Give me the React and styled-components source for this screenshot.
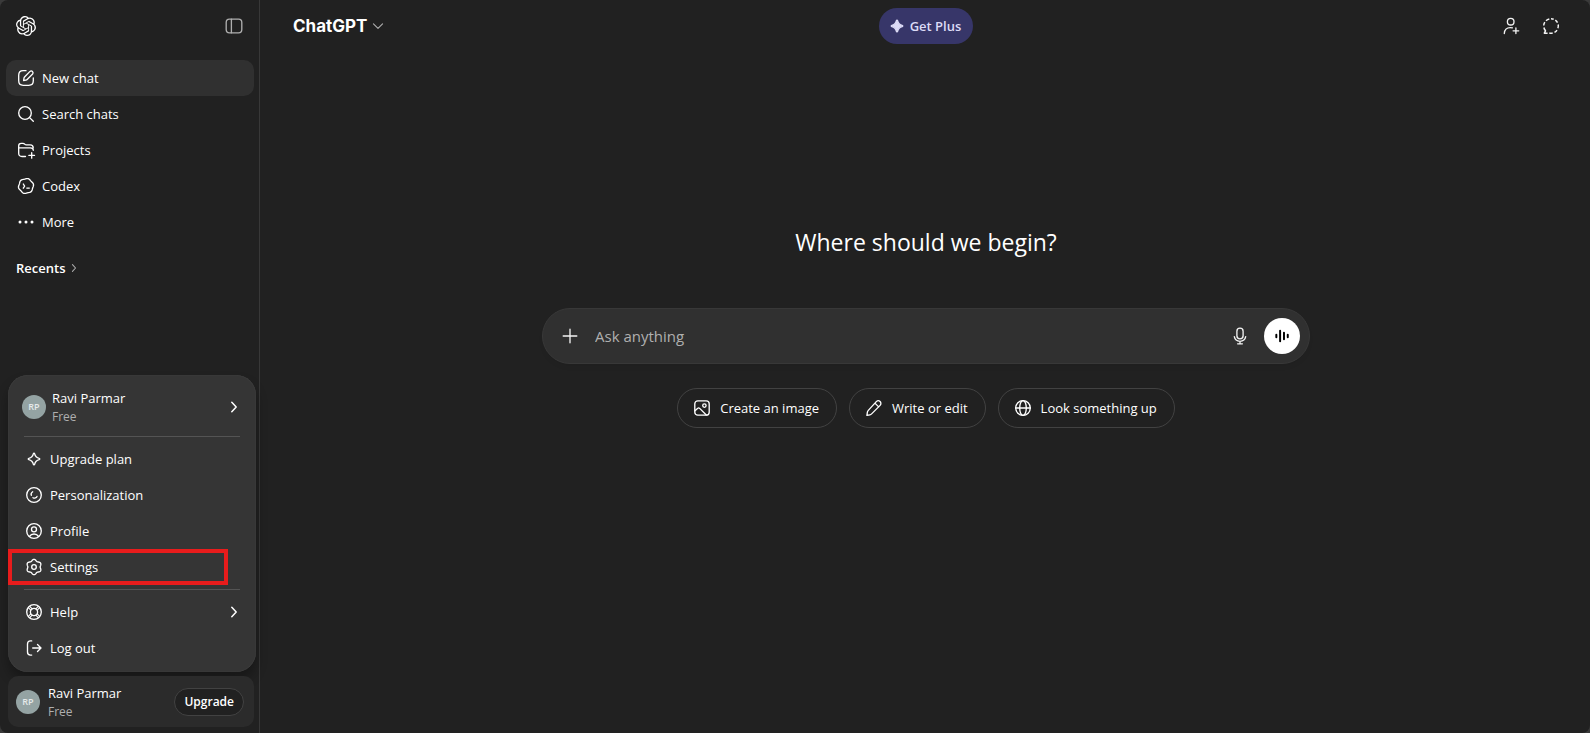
import React, { useState } from 'react'
import styled, { createGlobalStyle, css } from 'styled-components';
import { SiOpenai } from 'react-icons/si';

const GlobalStyle = createGlobalStyle`
  * {
    box-sizing: border-box;
  }
  body {
    margin: 0;
    background-color: #3a3a3a;
    color: #ffffff;
    font-family: "Open Sans", "Noto Sans", sans-serif;
    font-size: 13px;
    line-height: 20px;
  }
  button, input {
    font: inherit;
    color: inherit;
  }
  button {
    border: none;
    background: none;
    padding: 0;
    cursor: pointer;
  }
  a {
    color: inherit;
    text-decoration: none;
  }
`;

// closed outline with evenly spaced lobes around the icon centre
const lobedPath = (lobes, radius, depth, turn = 0) => {
  const steps = 96;
  const points = Array.from({ length: steps }, (_, i) => {
    const angle = (i / steps) * Math.PI * 2;
    const r = radius + depth * Math.cos(lobes * angle);
    const x = 10 + r * Math.sin(angle + turn);
    const y = 10 - r * Math.cos(angle + turn);
    return `${x.toFixed(2)} ${y.toFixed(2)}`;
  });
  return `M${points.join('L')}z`;
};

const icons = {
  panel: (
    <>
      <rect x="2.2" y="3.2" width="15.6" height="13.6" rx="3.2" />
      <path d="M7.4 3.2v13.6" />
    </>
  ),
  compose: (
    <>
      <path d="M10 2.7H7.2C4.4 2.7 2.7 4.4 2.7 7.2v5.6c0 2.8 1.7 4.5 4.5 4.5h5.6c2.8 0 4.5-1.7 4.5-4.5V10" />
      <path d="M14 3.4a1.85 1.85 0 0 1 2.6 2.6l-5.2 5.3c-.4.4-.9.7-1.5.8l-2.3.4.4-2.3c.1-.6.4-1.1.8-1.5z" />
    </>
  ),
  search: (
    <>
      <circle cx="9" cy="9" r="6.3" />
      <path d="M13.6 13.6 17.3 17.3" />
    </>
  ),
  projects: (
    <>
      <path d="M9.5 16.5H6c-2.200 0-3.300-1.200-3.300-3.300V5.800c0-1.500 1-2.500 2.500-2.500h1.700c.8 0 1.300.2 1.800.8.500.6 1 .8 1.700.8h3.800c1.900 0 3 1.100 3 3" />
      <path d="M2.700 7.900h11.600c1.800 0 3 1.100 3 2.400" />
      <path d="M15.700 12.600v5.600M12.900 15.400h5.600" />
    </>
  ),
  codex: (
    <>
      <path d={lobedPath(6, 7.3, 0.35, 0.3)} />
      <path d="m7.300 8 1.300 2.100-1.300 2.100M10.800 12.100h2.500" />
    </>
  ),
  more: (
    <g fill="currentColor" stroke="none">
      <circle cx="4" cy="10" r="1.500" />
      <circle cx="10" cy="10" r="1.500" />
      <circle cx="16" cy="10" r="1.500" />
    </g>
  ),
  chevronRight: <path d="m7.800 5.200 4.400 4.800-4.400 4.800" />,
  chevronDown: <path d="m3.500 7 6.500 6.300L16.500 7" />,
  sparkle: <path d="M10 4.200c.3 0 .5.200.6.500.6 2.800 1.900 4.100 4.700 4.700.6.100.6 1.100 0 1.200-2.800.6-4.100 1.900-4.700 4.700-.1.600-1.100.6-1.200 0-.6-2.800-1.900-4.100-4.700-4.700-.6-.1-.6-1.100 0-1.200 2.800-.6 4.100-1.900 4.700-4.700.1-.3.300-.5.600-.5z" />,
  personalization: (
    <>
      <circle cx="10" cy="10" r="7.300" />
      <path d="M8.700 6.800c-1.300.8-1.900 2.200-1.400 3.600" />
      <path d="M9 12.700c1.500.9 3.300.3 4-1.300" />
    </>
  ),
  profile: (
    <>
      <circle cx="10" cy="10" r="7.300" />
      <circle cx="10" cy="8.300" r="2.500" />
      <path d="M5.500 15.400c1-1.600 2.600-2.400 4.500-2.400s3.500.8 4.500 2.400" />
    </>
  ),
  settings: (
    <>
      <path d={lobedPath(6, 6.9, 0.75)} />
      <circle cx="10" cy="10" r="2.300" />
    </>
  ),
  help: (
    <>
      <circle cx="10" cy="10" r="7.300" />
      <circle cx="10" cy="10" r="3.600" />
      <path d="m4.300 5.700 2.500 2.500M5.700 4.300l2.500 2.500M15.700 5.700l-2.500 2.500M14.300 4.300l-2.500 2.500M4.300 14.300l2.500-2.500M5.700 15.700l2.500-2.500M15.700 14.300l-2.500-2.500M14.300 15.700l-2.500-2.500" strokeWidth="1.100" />
    </>
  ),
  logout: (
    <>
      <path d="M7.700 2.900H6.500C4.500 2.900 3.500 4 3.500 6v8c0 2 1 3.100 3 3.100h1.200" />
      <path d="M8.700 10h8.200M13.500 6.500l3.500 3.500-3.500 3.500" />
    </>
  ),
  addPerson: (
    <>
      <circle cx="9.700" cy="5.700" r="3.300" />
      <path d="M3.300 17.500c.2-3.500 2.500-5.900 6-5.900.8 0 1.500.1 2.100.3" />
      <path d="M14.900 12v5.600M12.100 14.800h5.600" />
    </>
  ),
  temporary: (
    <g strokeLinecap="butt">
      <path d="M8.300 2.900A7.300 7.300 0 0 0 5 4.700M3.800 6.200A7.300 7.300 0 0 0 2.700 9.500M2.900 11.500A7.300 7.300 0 0 0 4.500 14.800L3.300 17.200H6.600" />
      <path d="M8.300 17.100A7.300 7.300 0 0 0 11.700 17.100M13.500 16.400A7.300 7.300 0 0 0 16 14.100M16.900 12.300A7.300 7.300 0 0 0 17.200 8.500M16.500 6.700A7.300 7.300 0 0 0 14.300 4.100M12.700 3.200A7.300 7.300 0 0 0 10 2.700" />
    </g>
  ),
  plus: <path d="M10 3.200v13.600M3.200 10h13.600" />,
  mic: (
    <>
      <rect x="6.900" y="2.200" width="6.200" height="10.600" rx="3.100" />
      <path d="M4.300 10.700c.5 2.700 2.800 4.600 5.700 4.600s5.200-1.900 5.700-4.600M10 15.300v2.400M7.600 17.800h4.800" />
    </>
  ),
  voice: <path d="M3.700 8.500v3M7.900 4.100v11.800M12.200 6.500v7M16.400 8.500v3" strokeWidth="2.200" />,
  image: (
    <>
      <rect x="2.800" y="2.800" width="14.400" height="14.400" rx="3" />
      <circle cx="12.400" cy="7.600" r="1.700" />
      <path d="m3 12.700 2.500-2.300c.7-.6 1.500-.6 2.200 0L14.300 17" />
    </>
  ),
  pencil: (
    <path d="M12.300 3.600c1.100-1.100 2.800-1.100 3.800-.1s1.100 2.800 0 3.900l-8.500 8.500c-.5.500-1 .8-1.700.9l-3 .6.500-3.200c.1-.7.400-1.300.9-1.800zM10.900 5.100l3.800 3.800" />
  ),
  globe: (
    <>
      <circle cx="10" cy="10" r="7.300" />
      <ellipse cx="10" cy="10" rx="3.300" ry="7.300" />
      <path d="M2.700 10h14.600" />
    </>
  ),
};

const Icon = ({ name, size = 20, width = 1.33, filled }) => (
  <StyleIcon
    viewBox="0 0 20 20"
    width={size}
    height={size}
    fill={filled ? 'currentColor' : 'none'}
    stroke="currentColor"
    strokeWidth={width}
    strokeLinecap="round"
    strokeLinejoin="round"
    aria-hidden="true"
  >
    {icons[name]}
  </StyleIcon>
);

const navItems = [
  { icon: 'compose', title: 'New chat', active: true },
  { icon: 'search', title: 'Search chats' },
  { icon: 'projects', title: 'Projects' },
  { icon: 'codex', title: 'Codex' },
  { icon: 'more', title: 'More' },
];

const accountItems = [
  { icon: 'sparkle', title: 'Upgrade plan' },
  { icon: 'personalization', title: 'Personalization' },
  { icon: 'profile', title: 'Profile' },
  { icon: 'settings', title: 'Settings', marked: true },
];

const suggestions = [
  { icon: 'image', title: 'Create an image' },
  { icon: 'pencil', title: 'Write or edit' },
  { icon: 'globe', title: 'Look something up' },
];

const Account = () => (
  <>
    <Avatar>RP</Avatar>
    <AccountText>
      <span>Ravi Parmar</span>
      <small>Free</small>
    </AccountText>
  </>
);

const App = () => {
  const [prompt, setPrompt] = useState('');

  return (
    <Page>
      <GlobalStyle />
      <Sidebar>
        <SidebarHeader>
          <LogoLink href="#home" aria-label="ChatGPT home">
            <SiOpenai size={20} />
          </LogoLink>
          <IconButton $muted aria-label="Close sidebar">
            <Icon name="panel" />
          </IconButton>
        </SidebarHeader>
        <Nav>
          {navItems.map(item => (
            <NavLink key={item.title} href="#chat" $active={item.active}>
              <Icon name={item.icon} />
              {item.title}
            </NavLink>
          ))}
        </Nav>
        <Recents>
          Recents
          <Icon name="chevronRight" size={14} width={1.5} />
        </Recents>
        <SidebarFooter>
          <AccountMenu>
            <MenuAccount>
              <Account />
              <Icon name="chevronRight" width={1.5} />
            </MenuAccount>
            <Divider />
            {accountItems.map(item => (
              <MenuItem key={item.title} $marked={item.marked}>
                <Icon name={item.icon} />
                {item.title}
              </MenuItem>
            ))}
            <Divider />
            <MenuItem>
              <Icon name="help" />
              <MenuLabel>Help</MenuLabel>
              <Icon name="chevronRight" width={1.5} />
            </MenuItem>
            <MenuItem>
              <Icon name="logout" />
              Log out
            </MenuItem>
          </AccountMenu>
          <AccountBar>
            <Account />
            <UpgradeButton>Upgrade</UpgradeButton>
          </AccountBar>
        </SidebarFooter>
      </Sidebar>

      <Main>
        <Header>
          <ModelButton>
            ChatGPT
            <Icon name="chevronDown" size={14} width={1.6} />
          </ModelButton>
          <PlusButton>
            <Icon name="sparkle" filled />
            Get Plus
          </PlusButton>
          <HeaderActions>
            <IconButton aria-label="Add people">
              <Icon name="addPerson" />
            </IconButton>
            <IconButton aria-label="Temporary chat">
              <Icon name="temporary" width={1.5} />
            </IconButton>
          </HeaderActions>
        </Header>
        <Content>
          <Title>Where should we begin?</Title>
          <Composer>
            <IconButton type="button" aria-label="Add files">
              <Icon name="plus" />
            </IconButton>
            <PromptInput
              type="text"
              aria-label="Ask anything"
              placeholder="Ask anything"
              value={prompt}
              onChange={(e) => setPrompt(e.target.value)}
            />
            <IconButton type="button" aria-label="Dictate">
              <Icon name="mic" />
            </IconButton>
            <VoiceButton type="button" aria-label="Use voice">
              <Icon name="voice" size={18} />
            </VoiceButton>
          </Composer>
          <Suggestions>
            {suggestions.map(item => (
              <Chip key={item.title}>
                <Icon name={item.icon} />
                {item.title}
              </Chip>
            ))}
          </Suggestions>
        </Content>
      </Main>
    </Page>
  );
};

export default App


const StyleIcon = styled.svg`
  display: block;
  flex: none;
`;

const Page = styled.div`
  display: flex;
  min-height: 100vh;
  background-color: #212121;
  border-radius: 8px;
`;

const Sidebar = styled.aside`
  display: flex;
  flex-direction: column;
  flex: none;
  width: 260px;
  border-right: 1px solid #383838;
`;

const SidebarHeader = styled.div`
  display: flex;
  align-items: center;
  justify-content: space-between;
  height: 52px;
  padding: 0 7px 0 16px;
`;

const LogoLink = styled.a`
  display: flex;
`;

const IconButton = styled.button`
  display: flex;
  align-items: center;
  justify-content: center;
  flex: none;
  width: 36px;
  height: 36px;
  border-radius: 8px;
  color: ${({ $muted }) => ($muted ? '#afafaf' : '#f3f3f3')};
`;

const Nav = styled.nav`
  display: flex;
  flex-direction: column;
  padding: 8px 5px 0 6px;
`;

const NavLink = styled.a`
  display: flex;
  align-items: center;
  gap: 6px;
  height: 36px;
  padding: 0 10px;
  border-radius: 10px;
  background-color: ${({ $active }) => ($active ? '#303030' : 'transparent')};
`;

const Recents = styled.button`
  display: flex;
  align-items: center;
  align-self: flex-start;
  gap: 2px;
  margin: 18px 16px;
  font-size: 13px;
  font-weight: 600;
  & > svg {
    color: #afafaf;
  }
`;

const SidebarFooter = styled.div`
  display: flex;
  flex-direction: column;
  gap: 4px;
  margin-top: auto;
  padding: 0 3px 6px 8px;
`;

const AccountMenu = styled.div`
  display: flex;
  flex-direction: column;
  padding: 6px 0;
  border-radius: 20px;
  background-color: #353535;
  box-shadow: inset 0 0 1px rgba(255, 255, 255, 0.2), 0 8px 12px rgba(0, 0, 0, 0.3);
  font-weight: 500;
`;

const Avatar = styled.span`
  display: flex;
  align-items: center;
  justify-content: center;
  flex: none;
  width: 24px;
  height: 24px;
  border-radius: 50%;
  background-color: #94a3a3;
  font-size: 9px;
  font-weight: 600;
  color: #e6eaea;
`;

const AccountText = styled.span`
  display: flex;
  flex-direction: column;
  flex: 1;
  text-align: left;
  & > small {
    font-size: 12px;
    line-height: 18px;
    font-weight: 400;
    color: #afafaf;
  }
`;

const MenuAccount = styled.button`
  display: flex;
  align-items: center;
  gap: 6px;
  height: 51px;
  padding: 0 12px 0 14px;
`;

const Divider = styled.hr`
  width: auto;
  height: 1px;
  margin: 4px 16px;
  border: none;
  background-color: #545454;
`;

const MenuItem = styled.button`
  display: flex;
  align-items: center;
  gap: 6px;
  height: 36px;
  padding: 0 12px 0 16px;
  text-align: left;
  ${({ $marked }) => $marked && css`
    margin-right: 28px;
    padding-left: 12px;
    border: 4px solid #e81c1c;
  `}
`;

const MenuLabel = styled.span`
  flex: 1;
`;

const AccountBar = styled.div`
  display: flex;
  align-items: center;
  gap: 8px;
  height: 51px;
  margin-right: 2px;
  padding: 0 10px 0 8px;
  border-radius: 10px;
  background-color: #2b2b2b;
`;

const UpgradeButton = styled.button`
  height: 28px;
  padding: 0 9px;
  border: 1px solid #424242;
  border-radius: 14px;
  background-color: #212121;
  font-size: 12px;
  font-weight: 600;
`;

const Main = styled.main`
  display: flex;
  flex-direction: column;
  flex: 1;
  min-width: 0;
  padding-left: 2px;
`;

const Header = styled.header`
  display: grid;
  grid-template-columns: 1fr auto 1fr;
  align-items: center;
  height: 52px;
  padding: 0 21px;
`;

const ModelButton = styled.button`
  display: flex;
  align-items: center;
  justify-self: start;
  gap: 4px;
  margin-left: 10px;
  font-family: Inter, sans-serif;
  font-size: 17px;
  line-height: 24px;
  font-weight: 700;
  & > svg {
    color: #afafaf;
  }
`;

const PlusButton = styled.button`
  display: flex;
  align-items: center;
  gap: 3px;
  height: 36px;
  padding: 0 12px 0 8px;
  border-radius: 18px;
  background-color: #373669;
  font-weight: 600;
  color: #dcdbf6;
`;

const HeaderActions = styled.div`
  display: flex;
  justify-content: flex-end;
  gap: 4px;
`;

const Content = styled.div`
  display: flex;
  flex-direction: column;
  align-items: center;
  padding: 172px 24px 24px;
`;

const Title = styled.h1`
  margin: 0;
  font-size: 23px;
  line-height: 36px;
  font-weight: 400;
`;

const Composer = styled.form`
  display: flex;
  align-items: center;
  width: 100%;
  max-width: 768px;
  height: 56px;
  margin: 48px 0 24px;
  padding: 0 9px;
  border: 1px solid #383838;
  border-radius: 28px;
  background-color: #303030;
  box-shadow: 0 4px 4px rgba(0, 0, 0, 0.04);
`;

const PromptInput = styled.input`
  flex: 1;
  min-width: 0;
  height: 36px;
  padding: 0 7px;
  border: none;
  outline: none;
  background: none;
  font-size: 15px;
  &::placeholder {
    color: #afafaf;
    opacity: 1;
  }
`;

const VoiceButton = styled(IconButton)`
  margin-left: 6px;
  border-radius: 50%;
  background-color: #ffffff;
  color: #000000;
`;

const Suggestions = styled.div`
  display: flex;
  flex-wrap: wrap;
  justify-content: center;
  gap: 12px;
`;

const Chip = styled.button`
  display: flex;
  align-items: center;
  gap: 8px;
  height: 40px;
  padding: 0 17px 0 14px;
  border: 1px solid #424242;
  border-radius: 20px;
`;
